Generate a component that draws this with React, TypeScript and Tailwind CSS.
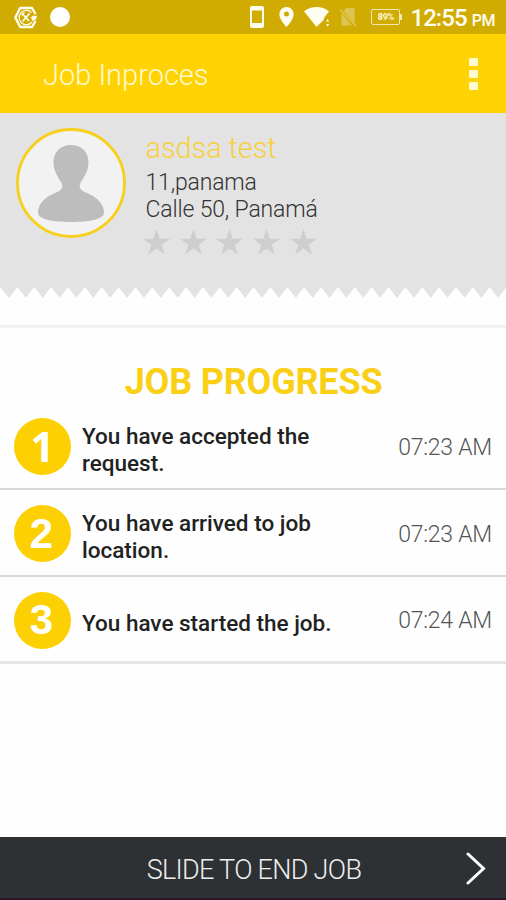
import React from "react";
import clsx from "clsx";

type Step = { num: number; text: string; time: string };

const steps: Step[] = [
    { num: 1, text: "You have accepted the request.", time: "07:23 AM" },
    { num: 2, text: "You have arrived to job location.", time: "07:23 AM" },
    { num: 3, text: "You have started the job.", time: "07:24 AM" },
];

const TEETH = 30;

const zigzag = Array.from(
    { length: TEETH },
    (_, i) => `L${i * 16.87 + 9} 11 L${(i + 1) * 16.87 + 0.5} 0`
).join(" ");

function StatusBar() {
    return (
        <div className="flex h-[34px] items-center bg-[#d0ac02] text-white">
            <svg className="ml-[14px] h-[23px] w-[24px]" viewBox="0 0 24 23" fill="none">
                <path
                    d="M21.500 8 18 2H6.200L1.300 11.500 6.200 21H18l3.500-6"
                    stroke="#fffdf0"
                    strokeWidth="2.4"
                    strokeLinejoin="round"
                />
                <path d="M17.500 6.500A7.200 7.200 0 1 0 18 16" stroke="#fffdf0" strokeWidth="1.300" />
                <path d="M8.500 8l6.500 7M15.500 7.500l-7 8" stroke="#fffdf0" strokeWidth="1.800" />
                <path d="M7.500 9l3-2.500" stroke="#fffdf0" strokeWidth="1.500" />
                <path d="M17 11.500l1.500-1.700H23l-1 3.700-3.500 1.700z" fill="#fffdf0" />
            </svg>
            <div className="ml-[12px] h-5 w-5 rounded-full bg-white" />

            <svg className="ml-auto h-[22px] w-[14px]" viewBox="0 0 14 22">
                <path
                    fill="#fffdf0"
                    fillRule="evenodd"
                    d="M2 0h10a2 2 0 0 1 2 2v18a2 2 0 0 1-2 2H2a2 2 0 0 1-2-2V2a2 2 0 0 1 2-2zm0 4.500v12.500h10V4.500z"
                />
            </svg>
            <svg className="ml-[15px] h-[20px] w-[15px]" viewBox="0 0 15 20">
                <path
                    fill="#fffdf0"
                    fillRule="evenodd"
                    d="M7.500 0A7.200 7.200 0 0 0 .3 7.200C.3 12.500 7.500 20 7.500 20s7.200-7.500 7.200-12.800A7.200 7.200 0 0 0 7.500 0zm0 4.600a2.500 2.500 0 1 1 0 5 2.500 2.500 0 0 1 0-5z"
                />
            </svg>
            <svg className="ml-[10px] h-[20px] w-[27px]" viewBox="0 0 27 20">
                <path
                    fill="#fffdf0"
                    d="M0 4.300C3.500 1.500 8 0 12.500 0S21.500 1.500 25 4.300L20 11v1.500L12.500 20z"
                />
                <path fill="#fffdf0" d="M22 14.500l1.600-2.500 1.600 2.500zM22 17l1.600 2.500 1.600-2.500z" />
            </svg>
            <svg className="ml-[8px] h-[20px] w-[18px]" viewBox="0 0 18 20">
                <path fill="#dfc455" d="M7 1h8.500v15.500L4.500 4z M2.500 6v12.500H13z" />
                <path d="M1 2.500 17.300 19.200" stroke="#dfc455" strokeWidth="1.400" />
            </svg>
            <div className="relative ml-[14px] flex h-[16px] w-[29px] items-center justify-center rounded-[2px] border border-[#f3e7b0] font-[Roboto] text-[9px] font-bold leading-none tracking-[-0.2px] text-[#fff8dc]">
                89%
                <span className="absolute top-[4px] -right-[3px] h-[6px] w-[2px] bg-[#f3e7b0]" />
            </div>
            <div className="mr-[11px] ml-[10px] flex items-baseline pt-[2px] font-[Roboto] font-medium text-[#fffdf0]">
                <span className="text-[24px] leading-none tracking-[-0.9px]">12:55</span>
                <span className="ml-[5px] text-[16px] leading-none tracking-[-0.5px]">PM</span>
            </div>
        </div>
    );
}

function Header() {
    return (
        <header className="flex h-[79px] items-center justify-between bg-[#ffd204] pr-[28px] pl-[43px]">
            <h1 className="pt-[3px] font-[Roboto] text-[29px] leading-none font-light text-[#fff9cf]">
                Job Inproces
            </h1>
            <div className="flex flex-col gap-1">
                {[0, 1, 2].map((i) => (
                    <span key={i} className="h-2 w-[9px] rounded-[1px] bg-[#fff9cf]" />
                ))}
            </div>
        </header>
    );
}

function Avatar() {
    return (
        <svg className="h-[110px] w-[110px] shrink-0" viewBox="0 0 110 110">
            <circle cx="55" cy="55" r="53.500" fill="#f2f2f2" stroke="#f7cf1d" strokeWidth="2.800" />
            <path
                fill="#bdbdbd"
                d="M55 17C44.500 17 37.500 24 37.500 34.500C37.500 43 42 49 45.500 55C47.500 60 46 62 39 65C29 69 22 76 22 84.500C22 91 35 94 55 94C75 94 88 91 88 84.500C88 76 81 69 71 65C64 62 62.500 60 64.500 55C68 49 72.500 43 72.500 34.500C72.500 24 65.500 17 55 17Z"
            />
        </svg>
    );
}

function Stars() {
    return (
        <div className="mt-[6px] -ml-[2.500px] flex gap-[9.700px]">
            {[1, 2, 3, 4, 5].map((n) => (
                <svg key={n} className="h-[26px] w-[27px]" viewBox="0 0 27 26">
                    <path
                        fill="#cecece"
                        d="M13.500 0l3.200 9.700H27l-8.300 6 3.200 9.800-8.400-6-8.400 6 3.200-9.800L0 9.700h10.300z"
                    />
                </svg>
            ))}
        </div>
    );
}

function Customer() {
    return (
        <section className="h-[215px] border-b-[3px] border-[#f1f1f1]">
            <div className="flex h-[174px] bg-[#e3e3e3] pt-[15px] pl-[16px]">
                <Avatar />
                <div className="ml-[19.500px] font-[Roboto] font-light">
                    <p className="mt-[3px] text-[29px] leading-[34px] tracking-[-0.1px] text-[#f8d03c]">
                        asdsa test
                    </p>
                    <div className="mt-[4px] text-[23px] leading-[27px] tracking-[-0.160px] text-[#333]">
                        <p>11,panama</p>
                        <p>Calle 50, Panamá</p>
                    </div>
                    <Stars />
                </div>
            </div>
            <svg className="block h-[12px] w-full" viewBox="0 0 506 12">
                <path fill="#e3e3e3" d={`M0 0 ${zigzag} Z`} />
            </svg>
        </section>
    );
}

function StepRow({ step }: { step: Step }) {
    return (
        <li className="flex h-[87px] items-center border-b-2 border-[#d8d8d8] pt-[2px] pr-[14px] pl-[14px] last:border-b-[3px] last:border-[#e6e6e6]">
            <span
                className={clsx(
                    "flex size-[57px] shrink-0 items-center justify-center rounded-full bg-[#fdd003] leading-none font-bold text-white",
                    step.num === 1
                        ? "pb-[1px] font-['Open_Sans'] text-[42px]"
                        : "pr-[2px] font-['Liberation_Sans'] text-[42px]"
                )}
            >
                {step.num}
            </span>
            <p className="ml-[11px] w-[256px] pt-[7px] font-[Roboto] text-[22.500px] leading-[27px] font-medium text-[#222]">
                {step.text}
            </p>
            <time className="ml-auto pt-[3px] font-[Roboto] text-[23px] font-light tracking-[-0.250px] whitespace-nowrap text-[#555]">
                {step.time}
            </time>
        </li>
    );
}

const App: React.FC = () => {
    return (
        <div className="flex h-[900px] w-full flex-col overflow-hidden bg-[#fefefe]">
            <StatusBar />
            <Header />
            <Customer />
            <main className="flex-1">
                <h2 className="pt-[34px] pl-[1px] text-center font-[Roboto] text-[36px] leading-[40px] font-bold tracking-[-0.200px] text-[#f9d015]">
                    JOB PROGRESS
                </h2>
                <ul className="pt-[1px]">
                    {steps.map((step) => (
                        <StepRow key={step.num} step={step} />
                    ))}
                </ul>
            </main>
            <footer className="relative flex h-[63px] items-center justify-center border-b-2 border-[#2a1626] bg-[#2d3134]">
                <span className="pt-[6px] pl-[2px] font-[Roboto] text-[27px] leading-none font-light tracking-[-0.700px] text-[#eee]">
                    SLIDE TO END JOB
                </span>
                <svg className="absolute top-[15px] right-[20px] h-[33px] w-[20px]" viewBox="0 0 20 33" fill="none">
                    <path d="M2 2 17.500 16.500 2 31" stroke="#fff" strokeWidth="3" strokeLinecap="round" />
                </svg>
            </footer>
        </div>
    );
};

export default App;
